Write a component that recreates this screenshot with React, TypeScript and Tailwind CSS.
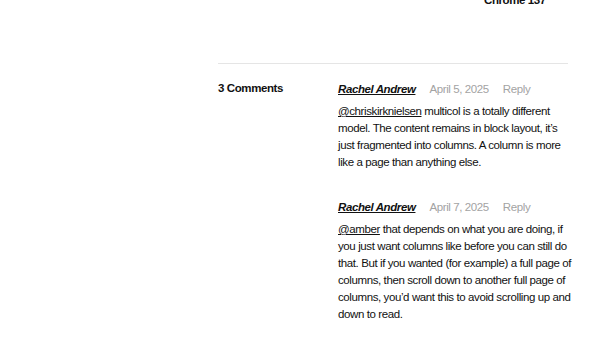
import React from "react";

const font = { fontFamily: '"Liberation Sans", Arial, sans-serif' };

function Comment({ date, mention, rest }: { date: string; mention: string; rest: string }) {
  return (
    <div>
      <div className="flex items-center gap-[14px] text-[11.5px] leading-[17px] tracking-[-0.4px]">
        <span className="font-bold italic underline text-[#111]">Rachel Andrew</span>
        <span className="text-[#a3a3a3]">{date}</span>
        <span className="text-[#a3a3a3]">Reply</span>
      </div>
      <p className="mt-[5px] text-[11.5px] leading-[17px] tracking-[-0.4px] text-[#111]">
        <span className="underline">{mention}</span> {rest}
      </p>
    </div>
  );
}

export default function App() {
  return (
    <div className="w-[600px] h-[338px] bg-white overflow-hidden" style={font}>
      <div className="-mt-[8px] h-[16px] pl-[484px] text-[11.5px] leading-[16px] tracking-[-0.4px] font-bold text-[#111]">Chrome 137</div>
      <div className="ml-[218px] w-[350px] mt-[55px] border-t border-[#e5e5e5]">
        <div className="flex pt-[17px] -mr-[6px]">
          <div className="w-[120px] shrink-0 -mt-[1px] text-[11.5px] leading-[17px] tracking-[-0.4px] font-bold text-[#111]">3 Comments</div>
          <div className="flex-1 flex flex-col gap-[28px]">
            <Comment
              date="April 5, 2025"
              mention="@chriskirknielsen"
              rest="multicol is a totally different model. The content remains in block layout, it’s just fragmented into columns. A column is more like a page than anything else."
            />
            <Comment
              date="April 7, 2025"
              mention="@amber"
              rest="that depends on what you are doing, if you just want columns like before you can still do that. But if you wanted (for example) a full page of columns, then scroll down to another full page of columns, you’d want this to avoid scrolling up and down to read."
            />
          </div>
        </div>
      </div>
    </div>
  );
}
